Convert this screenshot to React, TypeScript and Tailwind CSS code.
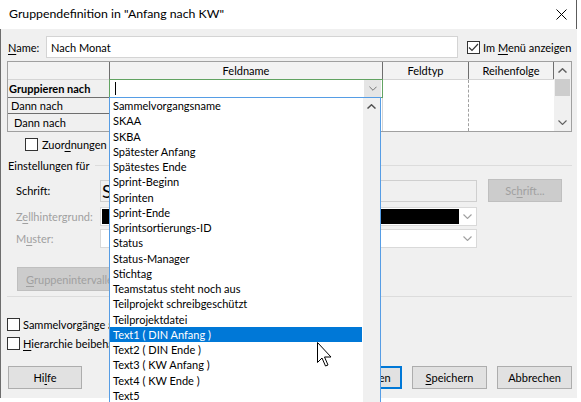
import React from 'react'

const items = [
  'Sammelvorgangsname',
  'SKAA',
  'SKBA',
  'Spätester Anfang',
  'Spätestes Ende',
  'Sprint-Beginn',
  'Sprinten',
  'Sprint-Ende',
  'Sprintsortierungs-ID',
  'Status',
  'Status-Manager',
  'Stichtag',
  'Teamstatus steht noch aus',
  'Teilprojekt schreibgeschützt',
  'Teilprojektdatei',
  'Text1 ( DIN Anfang )',
  'Text2 ( DIN Ende )',
  'Text3 ( KW Anfang )',
  'Text4 ( KW Ende )',
  'Text5',
]

function Check({ checked }: { checked?: boolean }) {
  return (
    <span className="flex h-[13px] w-[13px] shrink-0 items-center justify-center border border-[#333333] bg-white">
      {checked && (
        <svg width="11" height="9" viewBox="0 0 11 9">
          <path d="M1 4.5 L4 7.5 L10 1" fill="none" stroke="#333333" strokeWidth="1.2" />
        </svg>
      )}
    </span>
  )
}

function ChevDown({ color = '#707070', w = 9 }: { color?: string; w?: number }) {
  return (
    <svg width={w} height="5" viewBox="0 0 9 5">
      <path d="M0.5 0.5 L4.5 4.5 L8.5 0.5" fill="none" stroke={color} strokeWidth="1.1" />
    </svg>
  )
}

function ChevUp({ color = '#606060' }: { color?: string }) {
  return (
    <svg width="9" height="5" viewBox="0 0 9 5">
      <path d="M0.5 4.5 L4.5 0.8 L8.5 4.5" fill="none" stroke={color} strokeWidth="1.5" />
    </svg>
  )
}

function Btn({ children, w, blue }: { children: React.ReactNode; w: string; blue?: boolean }) {
  return (
    <div
      className={`flex h-[23px] items-center justify-center border bg-[#e1e1e1] ${w} ${
        blue ? 'border-[#0078d7] shadow-[inset_0_0_0_1px_#0078d7]' : 'border-[#adadad]'
      }`}
    >
      {children}
    </div>
  )
}

export default function App() {
  return (
    <div className="relative h-[402px] w-[581px] overflow-hidden whitespace-nowrap bg-white font-['Lato',sans-serif] text-[11px] leading-none text-black">
      <div className="w-[577px]">
        {/* title bar */}
        <div className="flex h-[29px] items-center justify-between border-r border-[#5c5c5c] bg-white pl-[9px] pr-[9px]">
          <span className="text-[12.3px]">Gruppendefinition in "Anfang nach KW"</span>
          <svg width="11" height="11" viewBox="0 0 11 11">
            <path d="M0.5 0.5 L10.5 10.5 M10.5 0.5 L0.5 10.5" stroke="#000" strokeWidth="1" />
          </svg>
        </div>

        <div className="flex h-[369px] flex-col border-l border-[#6d6d6d] bg-[#f0f0f0] pt-[7px]">
          {/* name row */}
          <div className="flex h-[22px] items-center">
            <span className="w-[45px] pl-[7px]">
              <span className="underline underline-offset-[2px]">N</span>ame:
            </span>
            <div className="flex h-[22px] w-[412px] items-center border border-[#d4d4d4] bg-white pl-[4px]">Nach Monat</div>
            <span className="ml-[9px]">
              <Check checked />
            </span>
            <span className="ml-[3px]">
              Im <span className="underline underline-offset-[2px]">M</span>enü anzeigen
            </span>
          </div>

          {/* table */}
          <div className="ml-[6px] mt-[3px] flex h-[71px] w-[565px] border border-[#a0a0a0] bg-white">
            <div className="flex w-[546px] flex-col">
              <div className="flex h-[18px] border-b border-[#d5d5d5] bg-[#f3f3f3]">
                <div className="w-[102px] border-r border-[#6e6e6e]" />
                <div className="flex w-[273px] items-center justify-center border-r border-[#6e6e6e]">Feldname</div>
                <div className="flex w-[86px] items-center justify-center border-r border-[#6e6e6e]">Feldtyp</div>
                <div className="flex w-[85px] items-center justify-center border-r border-[#6e6e6e]">Reihenfolge</div>
              </div>
              <div className="flex flex-1">
                <div className="flex w-[102px] flex-col border-r border-[#6e6e6e] bg-[#f0f0f0]">
                  <div className="flex h-[18px] items-center border-b border-[#6e6e6e] pl-[1px] font-bold">Gruppieren nach</div>
                  <div className="flex h-[16px] items-center border-b border-[#6e6e6e] pl-[3px]">Dann nach</div>
                  <div className="flex h-[17px] items-center pl-[6px]">Dann nach</div>
                </div>
                <div className="w-[273px] border-r border-[#d5d5d5]" />
                <div className="w-[86px] border-r border-dashed border-[#a0a0a0]" />
                <div className="w-[85px]" />
              </div>
            </div>
            <div className="flex w-[17px] flex-col bg-[#f0f0f0]">
              <div className="flex h-[17px] items-center justify-center">
                <ChevUp />
              </div>
              <div className="mx-[1px] h-[17px] bg-[#cdcdcd]" />
              <div className="flex-1" />
              <div className="flex h-[17px] items-center justify-center">
                <ChevDown color="#606060" />
              </div>
            </div>
          </div>

          {/* Zuordnungen */}
          <div className="ml-[24px] mt-[5px] flex h-[14px] items-center gap-[4px]">
            <Check />
            <span>
              Zuor<span className="underline underline-offset-[2px]">d</span>nungen gruppieren, nicht Vorgänge
            </span>
          </div>

          {/* Einstellungen */}
          <div className="mt-[7px] flex h-[14px] items-center pl-[7px] pr-[5px]">
            <span>Einstellungen für</span>
            <div className="ml-[6px] h-px flex-1 bg-[#dcdcdc]" />
          </div>

          {/* Schrift */}
          <div className="mt-[7px] flex h-[23px] items-center">
            <span className="w-[99px] pl-[15px]">Schrift:</span>
            <div className="flex h-[22px] w-[377px] items-center overflow-hidden border border-[#cfcfcf] bg-[#f0f0f0] pl-[1px] text-[18px]">
              Segoe UI 9
            </div>
            <div className="ml-[11px] flex h-[23px] w-[74px] items-center justify-center border border-[#bfbfbf] bg-[#cccccc] text-[#a0a0a0]">
              Sc<span className="underline underline-offset-[2px]">h</span>rift...
            </div>
          </div>

          {/* Zellhintergrund */}
          <div className="mt-[5px] flex h-[19px] items-center text-[#a0a0a0]">
            <span className="w-[99px] pl-[15px]">
              Z<span className="underline underline-offset-[2px]">e</span>llhintergrund:
            </span>
            <div className="flex h-[19px] w-[377px] items-center border border-[#d9d9d9] bg-white pl-[1px]">
              <div className="h-[15px] w-[357px] bg-black" />
              <div className="flex flex-1 items-center justify-center">
                <ChevDown color="#a0a0a0" />
              </div>
            </div>
          </div>

          {/* Muster */}
          <div className="mt-[3px] flex h-[19px] items-center text-[#a0a0a0]">
            <span className="w-[99px] pl-[15px]">
              M<span className="underline underline-offset-[2px]">u</span>ster:
            </span>
            <div className="flex h-[19px] w-[377px] items-center border border-[#d9d9d9] bg-white">
              <div className="w-[357px]" />
              <div className="flex flex-1 items-center justify-center">
                <ChevDown color="#a0a0a0" />
              </div>
            </div>
          </div>

          {/* Gruppenintervalle */}
          <div className="ml-[16px] mt-[19px] flex h-[24px] w-fit items-center border border-[#bfbfbf] bg-[#cccccc] px-[8px] text-[#a0a0a0]">
            <span className="underline underline-offset-[2px]">G</span>ruppenintervalle...
          </div>

          <div className="ml-[6px] mr-[5px] mt-[5px] h-px bg-[#dcdcdc]" />

          {/* bottom checks */}
          <div className="ml-[6px] mt-[20px] flex h-[14px] items-center gap-[3px]">
            <Check />
            <span>Sammelvorgänge anzeigen</span>
          </div>
          <div className="ml-[6px] mt-[5px] flex h-[14px] items-center gap-[3px]">
            <Check />
            <span>
              <span className="underline underline-offset-[2px]">H</span>ierarchie beibehalten
            </span>
          </div>

          {/* buttons */}
          <div className="mt-[16px] flex items-center justify-between pl-[7px] pr-[5px]">
            <Btn w="w-[74px]">
              Hi<span className="underline underline-offset-[2px]">l</span>fe
            </Btn>
            <div className="flex gap-[10px]">
              <Btn w="w-[75px]" blue>
                <span className="underline underline-offset-[2px]">A</span>nwenden
              </Btn>
              <Btn w="w-[75px]">
                <span className="underline underline-offset-[2px]">S</span>peichern
              </Btn>
              <Btn w="w-[75px]">Abbrechen</Btn>
            </div>
          </div>
        </div>
      </div>

      {/* active combobox editor in the grid */}
      <div className="absolute left-[109px] top-[79px] flex h-[19px] w-[274px] items-center border border-[#62a362] bg-white">
        <div className="ml-[5px] h-[13px] w-px bg-black" />
        <div className="flex-1" />
        <div className="mr-px flex h-[17px] w-[17px] items-center justify-center bg-[#e5e5e5]">
          <ChevDown color="#707070" w={8} />
        </div>
      </div>

      {/* dropdown list */}
      <div className="absolute left-[109px] top-[97px] flex h-[320px] w-[272px] border border-[#569de5] bg-white">
        <div className="flex w-[252px] flex-col">
          {items.map((it, i) => (
            <div
              key={it}
              className={`flex h-[15.25px] shrink-0 items-center pl-[3px] ${i === 15 ? 'bg-[#0078d7] text-white' : ''}`}
            >
              {it}
            </div>
          ))}
        </div>
        <div className="ml-px flex w-[17px] flex-col bg-[#f0f0f0]">
          <div className="flex h-[17px] items-center justify-center">
            <ChevUp color="#505050" />
          </div>
        </div>
      </div>

      {/* mouse pointer */}
      <svg className="absolute left-[317px] top-[342px]" width="16" height="26" viewBox="0 0 16 26">
        <path
          d="M0.5 0.5 L0.5 20.5 L5 16 L8.5 24 L11 23 L7.5 15 L14 15 Z"
          fill="#fff"
          stroke="#000"
          strokeWidth="1"
          strokeLinejoin="round"
        />
      </svg>
    </div>
  )
}
